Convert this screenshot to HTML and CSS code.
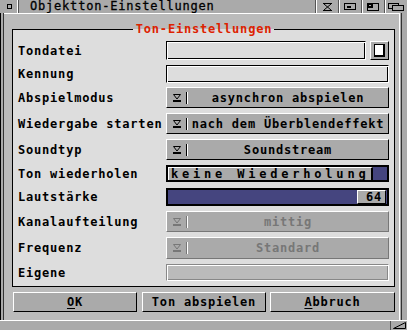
FILE: index.html
```html
<!DOCTYPE html>
<html lang="de">

<head>
    <meta charset="UTF-8">
    <title>Objektton-Einstellungen</title>
    <link rel="stylesheet" href="styles.css">
</head>

<body>
    <div class="win">
        <!-- Titelleiste -->
        <div class="titlebar">
            <div class="close"><span></span></div>
            <div class="title">Objektton-Einstellungen</div>
            <div class="gad">
                <svg width="9" height="8" viewBox="0 0 9 8">
                    <path d="M0 0.5h9M0 7.5h9M1 1l7 6M8 1l-7 6" stroke="#000" fill="none" />
                </svg>
            </div>
            <div class="gad">
                <svg width="12" height="7" viewBox="0 0 12 7">
                    <rect x="0.5" y="0.5" width="11" height="6" stroke="#000" fill="none" />
                    <rect x="3" y="3" width="4" height="2" fill="#000" />
                </svg>
            </div>
            <div class="gad">
                <svg width="12" height="8" viewBox="0 0 12 8">
                    <rect x="0.5" y="0.5" width="11" height="7" stroke="#000" fill="none" />
                    <rect x="0" y="0" width="6" height="5" fill="#000" />
                    <rect x="2" y="2" width="2" height="1" fill="#aaa" />
                </svg>
            </div>
            <div class="gad">
                <svg width="16" height="8" viewBox="0 0 16 8">
                    <rect x="0.5" y="0.5" width="10" height="5" stroke="#000" fill="none" />
                    <rect x="4.5" y="2.5" width="11" height="5" stroke="#000" fill="#aaa" />
                </svg>
            </div>
        </div>

        <div class="mid">
            <div class="lframe"></div>
            <div class="inner">
                <fieldset class="group">
                    <legend>Ton-Einstellungen</legend>

                    <div class="row">
                        <span class="lbl">Tondatei</span>
                        <div class="ctl file">
                            <div class="str"></div>
                            <div class="pick"><span></span></div>
                        </div>
                    </div>

                    <div class="row r-kennung">
                        <span class="lbl">Kennung</span>
                        <div class="ctl str"></div>
                    </div>

                    <div class="row r-cycle r-tight">
                        <span class="lbl">Abspielmodus</span>
                        <div class="ctl cycle">
                            <span class="arr"><svg width="8" height="8" viewBox="0 0 8 8"><path d="M0.5 0.5h7L4 5z" stroke="#000" fill="none" /><path d="M0 7h8" stroke="#000" stroke-width="2" /></svg></span>
                            <span class="sep"></span>
                            <span class="val">asynchron abspielen</span>
                        </div>
                    </div>

                    <div class="row r-cycle">
                        <span class="lbl">Wiedergabe starten</span>
                        <div class="ctl cycle">
                            <span class="arr"><svg width="8" height="8" viewBox="0 0 8 8"><path d="M0.5 0.5h7L4 5z" stroke="#000" fill="none" /><path d="M0 7h8" stroke="#000" stroke-width="2" /></svg></span>
                            <span class="sep"></span>
                            <span class="val">nach dem Überblendeffekt</span>
                        </div>
                    </div>

                    <div class="row r-cycle">
                        <span class="lbl">Soundtyp</span>
                        <div class="ctl cycle">
                            <span class="arr"><svg width="8" height="8" viewBox="0 0 8 8"><path d="M0.5 0.5h7L4 5z" stroke="#000" fill="none" /><path d="M0 7h8" stroke="#000" stroke-width="2" /></svg></span>
                            <span class="sep"></span>
                            <span class="val">Soundstream</span>
                        </div>
                    </div>

                    <div class="row r-rep">
                        <span class="lbl">Ton wiederholen</span>
                        <div class="ctl rep">
                            <span class="txt">keine Wiederholung</span>
                            <span class="cur"></span>
                        </div>
                    </div>

                    <div class="row r-vol">
                        <span class="lbl">Lautstärke</span>
                        <div class="ctl vol">
                            <span class="num">64</span>
                        </div>
                    </div>

                    <div class="row r-cycle">
                        <span class="lbl">Kanalaufteilung</span>
                        <div class="ctl cycle off">
                            <span class="arr"><svg width="8" height="8" viewBox="0 0 8 8"><path d="M0.5 0.5h7L4 5z" stroke="#777" fill="none" /><path d="M0 7h8" stroke="#777" stroke-width="2" /></svg></span>
                            <span class="sep"></span>
                            <span class="val">mittig</span>
                        </div>
                    </div>

                    <div class="row r-cycle r-freq">
                        <span class="lbl">Frequenz</span>
                        <div class="ctl cycle off">
                            <span class="arr"><svg width="8" height="8" viewBox="0 0 8 8"><path d="M0.5 0.5h7L4 5z" stroke="#777" fill="none" /><path d="M0 7h8" stroke="#777" stroke-width="2" /></svg></span>
                            <span class="sep"></span>
                            <span class="val">Standard</span>
                        </div>
                    </div>

                    <div class="row r-eigene">
                        <span class="lbl">Eigene</span>
                        <div class="ctl str off"></div>
                    </div>
                </fieldset>

                <!-- Knöpfe unten -->
                <div class="btns">
                    <div class="btn b-ok"><u>O</u>K</div>
                    <div class="btn b-play">Ton abspielen</div>
                    <div class="btn b-cancel"><u>A</u>bbruch</div>
                </div>
            </div>
            <div class="rframe"></div>
        </div>

        <div class="bframe">
            <div class="sizer">
                <svg width="13" height="7" viewBox="0 0 13 7">
                    <path d="M0.5 6.5h12v-6z" stroke="#000" fill="none" />
                </svg>
            </div>
        </div>
    </div>
</body>

</html>
```

FILE: styles.css
```css
* {
    margin: 0;
    padding: 0;
    box-sizing: border-box;
}

body {
    width: 407px;
    height: 330px;
    overflow: hidden;
    background-color: #aaa;
    font-family: "DejaVu Sans Mono", monospace;
    font-weight: bold;
    font-size: 12px;
    line-height: 13px;
    letter-spacing: 0.8px;
    color: #000;
}

.win {
    width: 407px;
    height: 330px;
    display: flex;
    flex-direction: column;
}

/* Titelleiste */
.titlebar {
    height: 13px;
    display: flex;
    background-color: #aaa;
}

.close {
    width: 19px;
    border-right: 1px solid #555;
    box-shadow: inset -1px 0 0 #fff;
    display: flex;
    align-items: center;
    justify-content: center;
}

.close span {
    width: 5px;
    height: 5px;
    border: 1px solid #000;
}

.title {
    flex: 1;
    padding: 0 0 0 11px;
    font-weight: normal;
    -webkit-text-stroke: 0.3px #000;
}

.gad {
    width: 23px;
    border-left: 1px solid #555;
    box-shadow: inset 1px 0 0 #fff;
    display: flex;
    align-items: center;
    justify-content: center;
}

.mid {
    height: 307px;
    display: flex;
}

.lframe {
    width: 4px;
    background-color: #aaa;
    border-left: 1px solid #000;
    border-right: 1px solid #333;
}

.inner {
    flex: 1;
    background-color: #bbb;
    border-top: 1px solid #fff;
}

.rframe {
    width: 8px;
    background-color: #aaa;
    border-left: 1px solid #fff;
    box-shadow: inset -5px 0 0 #aaa, inset -6px 0 0 #333;
}

.bframe {
    height: 10px;
    background-color: #aaa;
    border-top: 1px solid #fff;
    display: flex;
    justify-content: flex-end;
}

.sizer {
    width: 17px;
    border-left: 1px solid #555;
    display: flex;
    align-items: center;
    justify-content: center;
}

/* Gruppe */
.group {
    width: 383px;
    min-width: 0;
    margin: 9px 0 0 8px;
    border: 1px solid #000;
    background-color: #ddd;
    padding: 5px 5px 5px 5px;
    display: flex;
    flex-direction: column;
    gap: 5px;
}

.group legend {
    margin: 0 auto;
    padding: 0 2px 0 3px;
    color: #dd2200;
    background: linear-gradient(#bbb 50%, #ddd 50%);
}

.row {
    display: flex;
    align-items: center;
    height: 21px;
}

.lbl {
    width: 148px;
    padding-top: 1px;
}

.ctl {
    flex: 1;
    height: 100%;
}

.r-tight {
    margin-top: -1px;
}

.row:first-of-type {
    height: 19px;
}

.r-kennung {
    height: 18px;
}

.r-rep {
    height: 17px;
}

.r-vol {
    height: 18px;
    margin-top: 1px;
}

.r-freq {
    height: 22px;
}

.r-eigene {
    height: 17px;
}

/* Eingabefelder */
.file {
    display: flex;
    gap: 4px;
}

.str {
    flex: 1;
    height: 100%;
    background-color: #ddd;
    border: 1px solid #000;
    border-right-color: #fff;
    border-bottom-color: #fff;
    box-shadow: inset 1px 1px 0 #fff, inset -1px -1px 0 #000;
}

.str.off {
    background-color: #bbb;
    border-color: #888 #fff #fff #888;
    box-shadow: inset 1px 1px 0 #fff, inset -1px -1px 0 #888;
}

.pick {
    width: 19px;
    background-color: #aaa;
    border-top: 1px solid #fff;
    border-left: 1px solid #fff;
    border-bottom: 1px solid #000;
    border-right: 1px solid #000;
    display: flex;
    align-items: center;
    justify-content: center;
}

.pick span {
    width: 11px;
    height: 13px;
    background-color: #fff;
    border: 1px solid #000;
    border-right-width: 2px;
    border-bottom-width: 2px;
}

/* Auswahlknöpfe */
.cycle {
    display: flex;
    align-items: center;
    background-color: #aaa;
    border-top: 1px solid #fff;
    border-left: 1px solid #fff;
    border-bottom: 1px solid #000;
    border-right: 1px solid #000;
}

.arr {
    width: 8px;
    height: 8px;
    margin-left: 6px;
    display: flex;
}

.sep {
    width: 2px;
    height: 12px;
    margin-left: 5px;
    border-left: 1px solid #000;
    border-right: 1px solid #fff;
}

.val {
    flex: 1;
    text-align: center;
    padding-top: 1px;
}

.cycle.off {
    border-bottom-color: #777;
    border-right-color: #777;
}

.cycle.off .val {
    color: #777;
}

.cycle.off .sep {
    border-left-color: #777;
}

.rep {
    display: flex;
    border: 2px solid #000;
}

.rep .txt {
    flex: 1;
    background-color: #aaa;
    border-top: 1px solid #fff;
    border-left: 1px solid #fff;
    border-right: 2px solid #000;
    letter-spacing: 3.8px;
    padding-left: 2px;
    line-height: 12px;
}

.rep .cur {
    width: 14px;
    background-color: #45457f;
}

.vol {
    display: flex;
    align-items: center;
    justify-content: flex-end;
    background-color: #45457f;
    border: 2px solid #000;
    padding-right: 1px;
}

.vol .num {
    width: 29px;
    height: 14px;
    background-color: #aaa;
    border-top: 1px solid #fff;
    border-left: 1px solid #fff;
    border-bottom: 1px solid #000;
    border-right: 1px solid #000;
    text-align: right;
    padding-right: 3px;
    line-height: 12px;
}

/* Knöpfe */
.btns {
    display: flex;
    margin: 5px 0 0 9px;
}

.btn {
    height: 20px;
    background-color: #aaa;
    border-top: 1px solid #fff;
    border-left: 1px solid #fff;
    border-bottom: 1px solid #000;
    border-right: 1px solid #000;
    text-align: center;
    padding-top: 3px;
}

.b-ok {
    width: 124px;
}

.b-play {
    width: 124px;
    margin-left: 5px;
}

.b-cancel {
    width: 125px;
    margin-left: 4px;
}

.btn u {
    text-decoration-thickness: 1px;
    text-underline-offset: 2px;
}
```
